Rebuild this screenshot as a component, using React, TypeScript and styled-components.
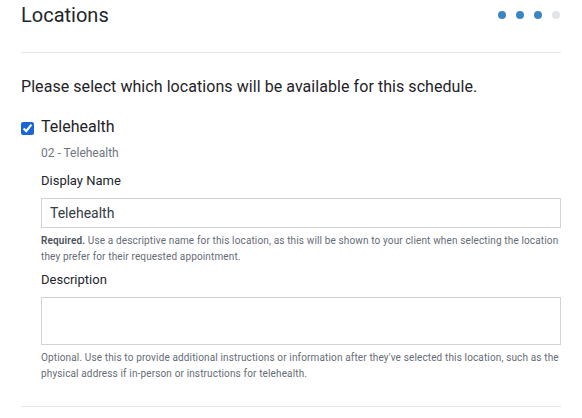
import React, { useState } from 'react';
import styled, { createGlobalStyle } from 'styled-components';

const GlobalStyle = createGlobalStyle`
  html, body {
    margin: 0;
    padding: 0;
    background: #ffffff;
  }
  body {
    font-family: Roboto, 'Liberation Sans', sans-serif;
    color: #1f2328;
  }
  * {
    box-sizing: border-box;
  }
`;

const steps = [true, true, true, false];

const App = () => {
  const [checked, setChecked] = useState(true);
  const [displayName, setDisplayName] = useState('Telehealth');
  const [description, setDescription] = useState('');

  return (
    <PageStyle>
      <GlobalStyle />
      <HeaderStyle>
        <TitleStyle>Locations</TitleStyle>
        <StepsStyle>
          {steps.map((done, i) => (
            <StepDot key={i} $active={done} />
          ))}
        </StepsStyle>
      </HeaderStyle>

      <IntroStyle>
        Please select which locations will be available for this schedule.
      </IntroStyle>

      <LocationRow>
        <CheckboxStyle
          type="checkbox"
          checked={checked}
          onChange={(e) => setChecked(e.target.checked)}
        />
        <LocationName>Telehealth</LocationName>
      </LocationRow>

      <LocationBody>
        <LocationCode>02 - Telehealth</LocationCode>

        <FieldStyle>
          <LabelStyle>Display Name</LabelStyle>
          <TextInput
            value={displayName}
            onChange={(e) => setDisplayName(e.target.value)}
          />
          <HelpText>
            <strong>Required.</strong> Use a descriptive name for this
            location, as this will be shown to your client when selecting the
            location they prefer for their requested appointment.
          </HelpText>
        </FieldStyle>

        <FieldStyle>
          <LabelStyle>Description</LabelStyle>
          <TextArea
            value={description}
            onChange={(e) => setDescription(e.target.value)}
          />
          <HelpText>
            Optional. Use this to provide additional instructions or
            information after they've selected this location, such as the
            physical address if in-person or instructions for telehealth.
          </HelpText>
        </FieldStyle>
      </LocationBody>

      <FooterDivider />
    </PageStyle>
  );
};

const PageStyle = styled.div`
  width: 582px;
  padding: 0 21px;
`;

const HeaderStyle = styled.header`
  display: flex;
  align-items: center;
  justify-content: space-between;
  height: 53px;
  padding-bottom: 23px;
  border-bottom: 1px solid #e3e5e9;
`;

const TitleStyle = styled.h1`
  margin: 0;
  font-size: 20px;
  font-weight: 400;
  line-height: 30px;
  color: #22262b;
`;

const StepsStyle = styled.div`
  display: flex;
  gap: 10px;
  padding-right: 1px;
`;

const StepDot = styled.span<{ $active: boolean }>`
  width: 8px;
  height: 8px;
  border-radius: 50%;
  background: ${(p) => (p.$active ? '#3a86c3' : '#e1e4e8')};
`;

const IntroStyle = styled.p`
  margin: 22px 0 0;
  font-size: 16px;
  line-height: 24px;
  letter-spacing: 0.06px;
  color: #1f2328;
`;

const LocationRow = styled.label`
  display: flex;
  align-items: center;
  gap: 7px;
  margin-top: 16px;
  height: 24px;
`;

const CheckboxStyle = styled.input`
  width: 13px;
  height: 13px;
  margin: 2px 0 0;
  accent-color: #1a66d6;
`;

const LocationName = styled.span`
  font-size: 16px;
  line-height: 24px;
  color: #1f2328;
`;

const LocationBody = styled.div`
  padding-left: 20px;
`;

const LocationCode = styled.div`
  margin-top: 5px;
  font-size: 12px;
  line-height: 18px;
  color: #6e7681;
`;

const FieldStyle = styled.div`
  display: flex;
  flex-direction: column;
  margin-top: 10px;

  & + & {
    margin-top: 6px;
  }
`;

const LabelStyle = styled.div`
  font-size: 13px;
  line-height: 18px;
  color: #22262b;
  margin-bottom: 8px;
`;

const TextInput = styled.input`
  width: 100%;
  height: 30px;
  padding: 0 8px;
  border: 1px solid #d0d4da;
  border-radius: 0;
  font-family: inherit;
  font-size: 14px;
  color: #333a42;
  outline: none;
`;

const TextArea = styled.textarea`
  width: 100%;
  height: 48px;
  padding: 6px 8px;
  border: 1px solid #d0d4da;
  border-radius: 0;
  font-family: inherit;
  font-size: 14px;
  resize: none;
  outline: none;
  display: block;
`;

const HelpText = styled.p`
  margin: 5px 0 0;
  font-size: 10px;
  line-height: 16px;
  letter-spacing: 0.14px;
  color: #656c75;

  strong {
    font-weight: 600;
    color: #4b525a;
  }
`;

const FooterDivider = styled.hr`
  margin: 24px 0 0;
  border: 0;
  border-top: 1px solid #e3e5e9;
`;

export default App;
